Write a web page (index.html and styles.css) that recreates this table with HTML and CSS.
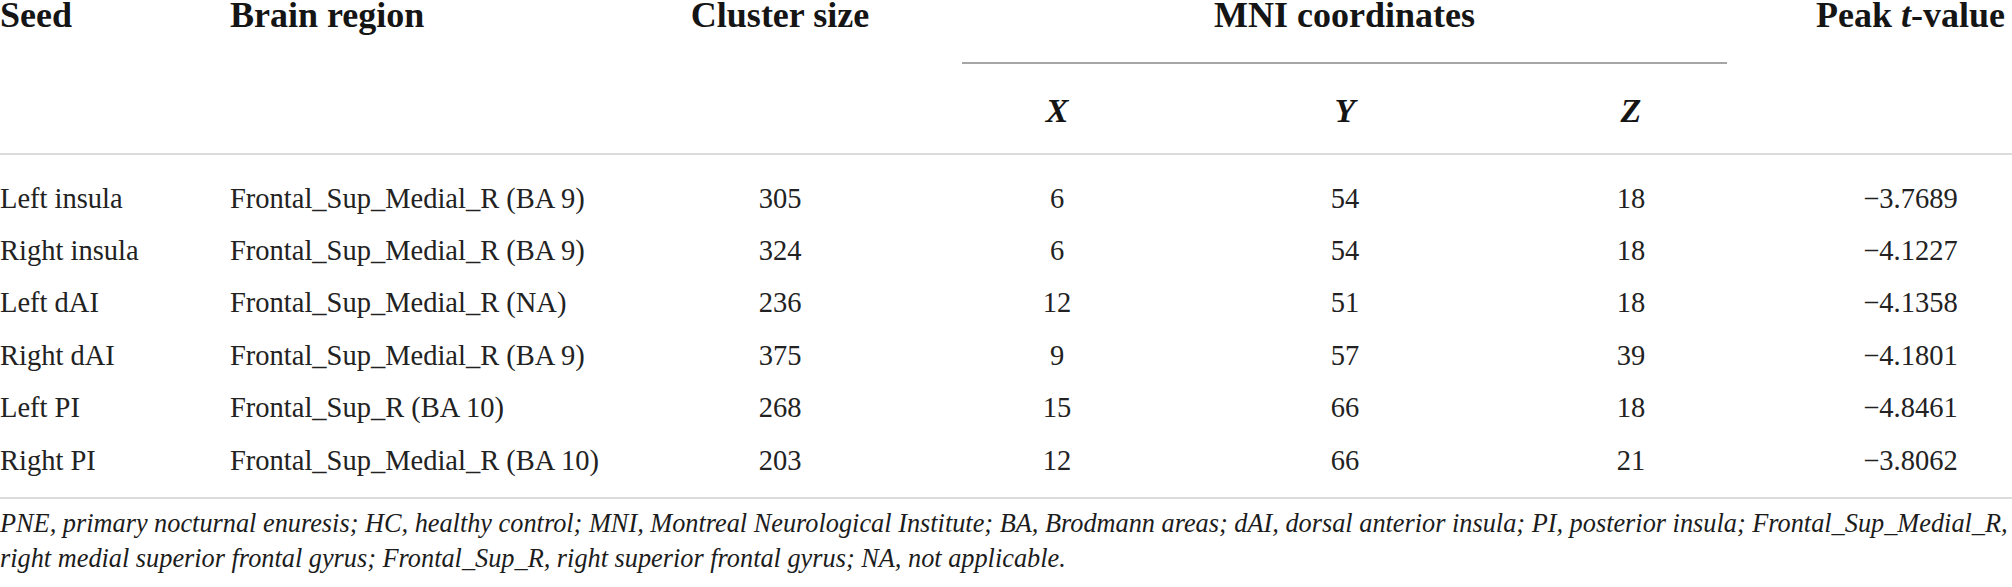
FILE: index.html
```html
<!DOCTYPE html>
<html lang="en">
<head>
<meta charset="utf-8">
<title>Table</title>
<link rel="stylesheet" href="styles.css">
</head>
<body>
<div class="wrap">
  <table class="tbl">
    <colgroup>
      <col class="c-seed">
      <col class="c-region">
      <col class="c-size">
      <col class="c-x">
      <col class="c-y">
      <col class="c-z">
      <col class="c-peak">
    </colgroup>
    <thead>
      <tr>
        <th rowspan="2" class="h-left h-span">Seed</th>
        <th rowspan="2" class="h-left h-span">Brain region</th>
        <th rowspan="2" class="h-span">Cluster size</th>
        <th colspan="3" class="h-mni">MNI coordinates<div class="mni-rule"></div></th>
        <th rowspan="2" class="h-span peak">Peak <i>t</i>-value</th>
      </tr>
      <tr>
        <th class="h-sub"><i>X</i></th>
        <th class="h-sub"><i>Y</i></th>
        <th class="h-sub"><i>Z</i></th>
      </tr>
    </thead>
    <tbody>
      <tr>
        <td class="left">Left insula</td>
        <td class="left">Frontal_Sup_Medial_R (BA 9)</td>
        <td>305</td><td>6</td><td>54</td><td>18</td>
        <td class="peak">−3.7689</td>
      </tr>
      <tr>
        <td class="left">Right insula</td>
        <td class="left">Frontal_Sup_Medial_R (BA 9)</td>
        <td>324</td><td>6</td><td>54</td><td>18</td>
        <td class="peak">−4.1227</td>
      </tr>
      <tr>
        <td class="left">Left dAI</td>
        <td class="left">Frontal_Sup_Medial_R (NA)</td>
        <td>236</td><td>12</td><td>51</td><td>18</td>
        <td class="peak">−4.1358</td>
      </tr>
      <tr>
        <td class="left">Right dAI</td>
        <td class="left">Frontal_Sup_Medial_R (BA 9)</td>
        <td>375</td><td>9</td><td>57</td><td>39</td>
        <td class="peak">−4.1801</td>
      </tr>
      <tr>
        <td class="left">Left PI</td>
        <td class="left">Frontal_Sup_R (BA 10)</td>
        <td>268</td><td>15</td><td>66</td><td>18</td>
        <td class="peak">−4.8461</td>
      </tr>
      <tr>
        <td class="left">Right PI</td>
        <td class="left">Frontal_Sup_Medial_R (BA 10)</td>
        <td>203</td><td>12</td><td>66</td><td>21</td>
        <td class="peak">−3.8062</td>
      </tr>
    </tbody>
  </table>
  <p class="note">PNE, primary nocturnal enuresis; HC, healthy control; MNI, Montreal Neurological Institute; BA, Brodmann areas; dAI, dorsal anterior insula; PI, posterior insula; Frontal_Sup_Medial_R, right medial superior frontal gyrus; Frontal_Sup_R, right superior frontal gyrus; NA, not applicable.</p>
</div>
</body>
</html>
```
FILE: styles.css
```css
html, body {
  margin: 0;
  padding: 0;
  background: #ffffff;
}

body {
  font-family: "Liberation Serif", "Times New Roman", serif;
  color: #1c1c1c;
  overflow: hidden;
}

.wrap {
  width: 2012px;
}

.tbl {
  width: 2012px;
  table-layout: fixed;
  border-collapse: separate;
  border-spacing: 0;
}

.c-seed { width: 230px; }
.c-region { width: 417px; }
.c-size { width: 266px; }
.c-x { width: 288px; }
.c-y { width: 288px; }
.c-z { width: 284px; }
.c-peak { width: 239px; }

.tbl th {
  font-size: 36px;
  font-weight: bold;
  line-height: 30px;
  padding: 0;
  text-align: center;
  vertical-align: top;
  color: #151515;
  white-space: nowrap;
}

.tbl th.h-left,
.tbl td.left {
  text-align: left;
}

.tbl th.h-span {
  border-bottom: 2px solid #dcdcdc;
}

.tbl th.h-mni {
  padding: 0 46px 0 49px;
}

.mni-rule {
  margin-top: 32px;
  height: 0;
  border-top: 2px solid #a6a6a6;
}

.tbl th.h-sub {
  font-size: 34px;
  padding: 31.5px 0 27.5px;
  border-bottom: 2px solid #dcdcdc;
}

.tbl th.peak,
.tbl td.peak {
  padding-left: 36px;
}

.tbl td {
  font-size: 28.5px;
  line-height: 28.4px;
  padding: 0 0 24px;
  text-align: center;
  vertical-align: top;
  white-space: nowrap;
  color: #222222;
}

.tbl tbody tr:first-child td {
  padding-top: 29.5px;
}

.tbl tbody tr:last-child td {
  padding-bottom: 22.5px;
  border-bottom: 2px solid #dcdcdc;
}

.note {
  margin: 7px 0 0;
  font-size: 26.3px;
  line-height: 35px;
  font-style: italic;
  color: #1c1c1c;
}
```
